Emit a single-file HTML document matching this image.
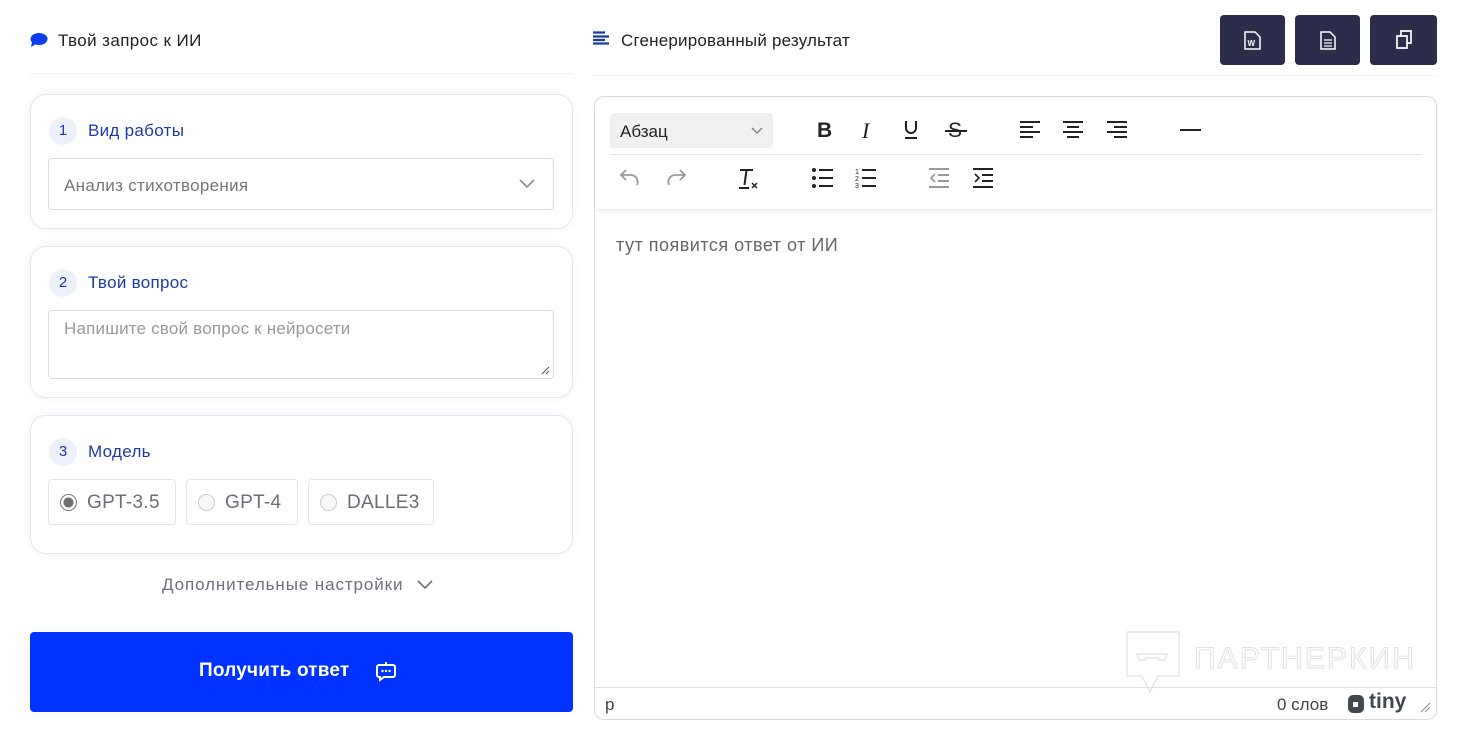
<!DOCTYPE html>
<html><head><meta charset="utf-8"><style>
*{box-sizing:border-box;margin:0;padding:0}
body{width:1466px;height:746px;background:#fff;font-family:"Liberation Sans","Noto Sans CJK SC",sans-serif;position:relative;overflow:hidden;color:#222}
.a{position:absolute}
.card{position:absolute;left:30px;width:543px;border:1px solid #e6e8f0;border-radius:16px;background:#fff;box-shadow:0 0 6px rgba(200,205,225,.25)}
.num{position:absolute;left:18px;width:28px;height:28px;border-radius:50%;background:#eef1fa;color:#1b3aa8;font-size:15px;text-align:center;line-height:28px}
.ttl{position:absolute;left:57px;color:#1b3aa8;font-size:17px;letter-spacing:.3px}
.radio{position:absolute;top:479px;height:46px;border:1px solid #e6e6ea;border-radius:4px;font-size:19px;color:#6b6d78;line-height:45px;padding-left:38px;letter-spacing:.3px}
.radio i{position:absolute;left:11px;top:14px;width:17px;height:17px;border-radius:50%;border:1px solid #ccc;background:#f8f8f8}
.btn{position:absolute;top:15px;width:65px;height:50px;background:#2b2d4a;border-radius:4px}
.ic{position:absolute;font-size:20px;color:#222}
</style></head><body>
<svg class="a" style="left:30px;top:32px" width="18" height="16" viewBox="0 0 18 16"><ellipse cx="9" cy="7" rx="8.5" ry="6" fill="#0a3df0"/><path d="M2 10 L1 15 L6 12Z" fill="#0a3df0"/></svg>
<div class="a" style="left:58px;top:31px;font-size:17px;letter-spacing:.4px">Твой запрос к ИИ</div>
<div class="a" style="left:30px;top:73px;width:543px;height:1px;background:#eef0f4"></div>

<div class="card" style="top:94px;height:135px">
 <div class="num" style="top:22px">1</div><div class="ttl" style="top:26px">Вид работы</div>
 <div class="a" style="left:17px;top:63px;width:506px;height:52px;border:1px solid #ddd;border-radius:4px;font-size:17px;letter-spacing:.3px;color:#777;padding:17px 0 0 15px">Анализ стихотворения
  <svg class="a" style="right:18px;top:20px" width="16" height="10" viewBox="0 0 16 10"><path d="M1 1 L8 8 L15 1" stroke="#8a8f9c" stroke-width="1.6" fill="none"/></svg></div>
</div>
<div class="card" style="top:246px;height:152px">
 <div class="num" style="top:22px">2</div><div class="ttl" style="top:26px">Твой вопрос</div>
 <div class="a" style="left:17px;top:63px;width:506px;height:69px;border:1px solid #ddd;border-radius:4px;font-size:17px;letter-spacing:.2px;color:#9a9a9a;padding:8px 0 0 15px">Напишите свой вопрос к нейросети
  <svg class="a" style="right:3px;bottom:3px" width="9" height="9"><path d="M1 8L8 1M5 8L8 5" stroke="#555" stroke-width="1"/></svg></div>
</div>
<div class="card" style="top:415px;height:139px">
 <div class="num" style="top:22px">3</div><div class="ttl" style="top:26px">Модель</div>
</div>
<div class="radio" style="left:48px;width:128px"><i style="border:1.5px solid #777;background:radial-gradient(circle,#707070 4.5px,#fff 5.5px)"></i>GPT-3.5</div>
<div class="radio" style="left:186px;width:112px"><i></i>GPT-4</div>
<div class="radio" style="left:308px;width:126px"><i></i>DALLE3</div>

<div class="a" style="left:162px;top:575px;font-size:17px;letter-spacing:.9px;color:#6b6f80">Дополнительные настройки</div>
<svg class="a" style="left:417px;top:580px" width="16" height="10"><path d="M1 1 L8 8 L15 1" stroke="#6b6f80" stroke-width="1.6" fill="none"/></svg>

<div class="a" style="left:30px;top:632px;width:543px;height:80px;background:#0033ff;border-radius:4px"></div>
<div class="a" style="left:199px;top:660px;font-size:19px;font-weight:bold;color:#fff;letter-spacing:.2px">Получить ответ</div>
<svg class="a" style="left:375px;top:660px" width="22" height="22" viewBox="0 0 22 22"><path d="M11 2v3M4 5h14a2 2 0 0 1 2 2v8a2 2 0 0 1-2 2H9l-4 3v-3H4a2 2 0 0 1-2-2V7a2 2 0 0 1 2-2z" stroke="#fff" stroke-width="2" fill="none"/><circle cx="7.5" cy="11" r="1.2" fill="#fff"/><circle cx="11" cy="11" r="1.2" fill="#fff"/><circle cx="14.5" cy="11" r="1.2" fill="#fff"/></svg>

<svg class="a" style="left:593px;top:31px" width="16" height="14"><path d="M0 1.5h12M0 5.5h16M0 9h12M0 12.5h16" stroke="#1b3aa8" stroke-width="2.2"/></svg>
<div class="a" style="left:621px;top:31px;font-size:17px;letter-spacing:.2px">Сгенерированный результат</div>
<div class="btn" style="left:1220px"><svg class="a" style="left:24px;top:16px" width="17" height="19" viewBox="0 0 17 19"><path d="M1 1h10l5 5v12H1z" stroke="#fff" stroke-width="1.5" fill="none"/><text x="3.5" y="15" font-size="8" font-weight="bold" fill="#fff" font-family="Liberation Sans">W</text></svg></div>
<div class="btn" style="left:1295px"><svg class="a" style="left:25px;top:16px" width="16" height="19" viewBox="0 0 16 19"><path d="M1 1h9l5 5v12H1z" stroke="#fff" stroke-width="1.5" fill="none"/><path d="M4 9h8M4 12h8M4 15h8" stroke="#fff" stroke-width="1.3"/></svg></div>
<div class="btn" style="left:1370px;width:67px"><svg class="a" style="left:25px;top:15px" width="18" height="19" viewBox="0 0 18 19"><path d="M6 1h10v12H6z" stroke="#fff" stroke-width="1.7" fill="none"/><path d="M2 6h10v12H2z" stroke="#fff" stroke-width="1.7" fill="#2b2d4a"/></svg></div>
<div class="a" style="left:593px;top:75px;width:844px;height:1px;background:#eef0f4"></div>

<div class="a" style="left:594px;top:96px;width:843px;height:624px;border:1px solid #ddd;border-radius:10px"></div>
<div class="a" style="left:595px;top:97px;width:841px;height:112px;border-radius:10px 10px 0 0;box-shadow:0 3px 6px -2px rgba(0,0,0,.12);background:#fff"></div>
<div class="a" style="left:610px;top:113px;width:163px;height:35px;background:#f0f0f0;border-radius:4px;font-size:17px;color:#222;padding:9px 0 0 10px">Абзац
 <svg class="a" style="left:141px;top:14px" width="12" height="8"><path d="M1 1l5 5 5-5" stroke="#777" stroke-width="1.3" fill="none"/></svg></div>
<div class="ic" style="left:817px;top:119px;font-weight:bold;font-size:21px">B</div>
<div class="ic" style="left:862px;top:118px;font-style:italic;font-family:'Liberation Serif',serif;font-size:22px">I</div>
<svg class="a" style="left:903px;top:120px" width="16" height="20"><path d="M3 1v7a5 5 0 0 0 10 0V1" stroke="#222" stroke-width="2" fill="none"/><path d="M2 18h12" stroke="#222" stroke-width="2"/></svg>
<div class="ic" style="left:948px;top:119px;font-size:21px">S</div><div class="a" style="left:945px;top:130px;width:22px;height:2px;background:#222"></div>
<svg class="a" style="left:1020px;top:121px" width="21" height="17"><path d="M0 1h20M0 6h13M0 11h20M0 16h13" stroke="#222" stroke-width="2"/></svg>
<svg class="a" style="left:1063px;top:121px" width="21" height="17"><path d="M0 1h20M4 6h12M0 11h20M4 16h12" stroke="#222" stroke-width="2"/></svg>
<svg class="a" style="left:1107px;top:121px" width="21" height="17"><path d="M0 1h20M7 6h13M0 11h20M7 16h13" stroke="#222" stroke-width="2"/></svg>
<div class="a" style="left:1180px;top:129px;width:21px;height:2px;background:#222"></div>
<div class="a" style="left:610px;top:154px;width:812px;height:1px;background:#e4e4e4"></div>
<svg class="a" style="left:619px;top:167px" width="22" height="22"><path d="M7 3L2 8l5 5M2 8h10a7 7 0 0 1 6 10" stroke="#999" stroke-width="1.8" fill="none"/></svg>
<svg class="a" style="left:665px;top:167px" width="22" height="22"><path d="M15 3l5 5-5 5M20 8H10a7 7 0 0 0-6 10" stroke="#999" stroke-width="1.8" fill="none"/></svg>
<svg class="a" style="left:738px;top:168px" width="22" height="22"><path d="M2 2h13M8.5 2l-2 15" stroke="#222" stroke-width="2" fill="none"/><path d="M1 20h10" stroke="#222" stroke-width="2"/><path d="M14 15l5 5M19 15l-5 5" stroke="#222" stroke-width="1.5"/></svg>
<svg class="a" style="left:812px;top:168px" width="22" height="20"><circle cx="2" cy="2" r="2" fill="#222"/><circle cx="2" cy="10" r="2" fill="#222"/><circle cx="2" cy="18" r="2" fill="#222"/><path d="M7 2h14M7 10h14M7 18h14" stroke="#222" stroke-width="2"/></svg>
<svg class="a" style="left:855px;top:167px" width="22" height="22"><text x="0" y="7" font-size="7" fill="#222">1</text><text x="0" y="14" font-size="7" fill="#222">2</text><text x="0" y="21" font-size="7" fill="#222">3</text><path d="M7 3h14M7 11h14M7 19h14" stroke="#222" stroke-width="2"/></svg>
<svg class="a" style="left:929px;top:168px" width="21" height="21"><path d="M0 1h20M9 7h11M9 13h11M0 19h20" stroke="#999" stroke-width="2"/><path d="M6 6l-4 4 4 4" stroke="#999" stroke-width="1.6" fill="none"/></svg>
<svg class="a" style="left:973px;top:168px" width="21" height="21"><path d="M0 1h20M9 7h11M9 13h11M0 19h20" stroke="#222" stroke-width="2"/><path d="M2 6l4 4-4 4" stroke="#222" stroke-width="1.6" fill="none"/></svg>

<div class="a" style="left:616px;top:235px;font-size:18px;letter-spacing:.5px;color:#666">тут появится ответ от ИИ</div>

<svg class="a" style="left:1124px;top:630px" width="300" height="66"><path d="M3 2h52v44H34l-8 16-8-16H3z" stroke="#e6e6e6" stroke-width="1.5" fill="none"/><path d="M12 24h32M14 24a4 4 0 0 0 8 4h12a4 4 0 0 0 8-4" stroke="#e6e6e6" stroke-width="1.5" fill="none"/><text x="70" y="38" font-size="30" fill="none" stroke="#e2e2e2" stroke-width="1" font-family="Liberation Sans" textLength="220">ПАРТНЕРКИН</text></svg>

<div class="a" style="left:595px;top:687px;width:841px;height:1px;background:#e0e0e0"></div>
<div class="a" style="left:605px;top:695px;font-size:17px;color:#444">p</div>
<div class="a" style="left:1277px;top:695px;font-size:17px;color:#444">0 слов</div>
<svg class="a" style="left:1347px;top:694px" width="18" height="20"><rect x="1" y="1" width="16" height="18" rx="5" fill="#40474f"/><path d="M6 8h5v5H6z" fill="#fff"/></svg>
<div class="a" style="left:1369px;top:690px;font-size:21px;font-weight:bold;color:#40474f">tiny</div>
<svg class="a" style="left:1420px;top:702px" width="11" height="11"><path d="M1 10L10 1M5 10L10 5" stroke="#888" stroke-width="1"/></svg>
</body></html>
